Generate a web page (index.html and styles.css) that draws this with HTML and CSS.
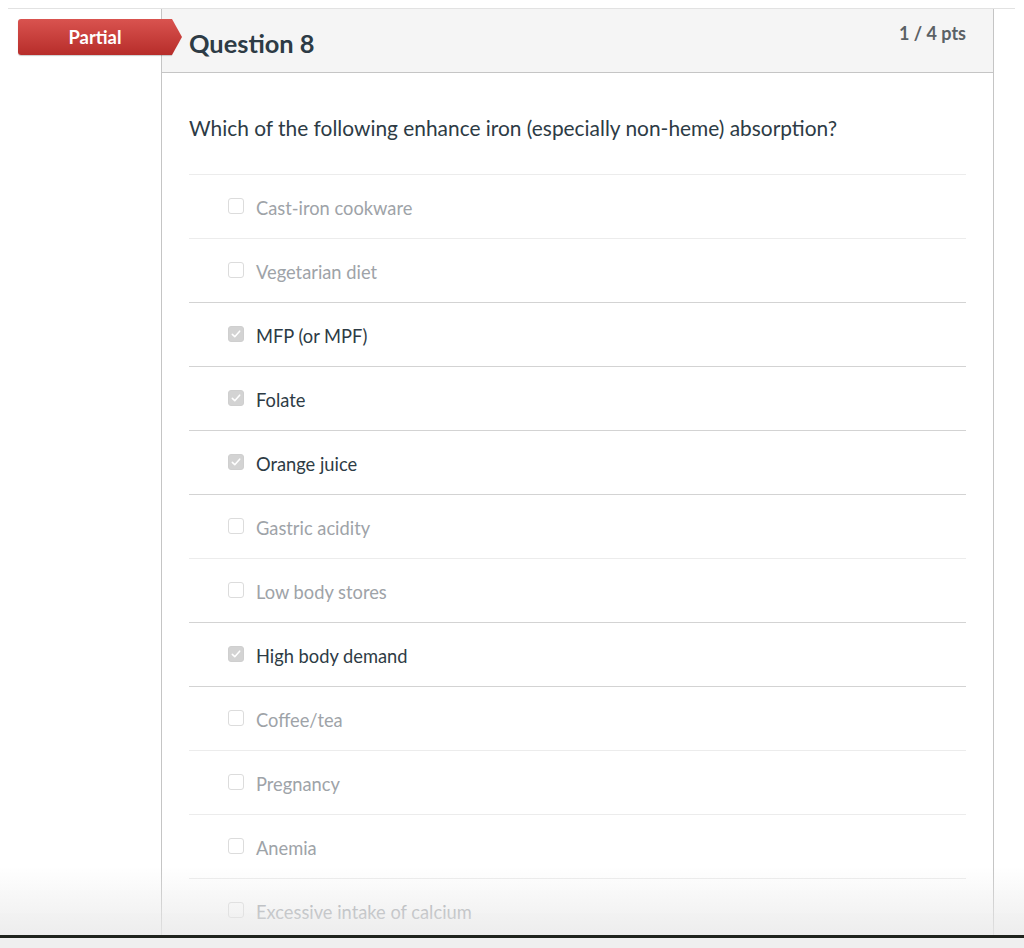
FILE: index.html
```html
<!DOCTYPE html>
<html>
<head>
<meta charset="utf-8">
<link rel="stylesheet" href="styles.css">
</head>
<body>
<div class="page">
  <div class="topline"></div>
  <div class="card">
    <div class="badge">Partial</div>
    <div class="header">
      <h2 class="title">Question 8</h2>
      <div class="pts">1 / 4 pts</div>
    </div>
    <div class="body">
      <p class="question">Which of the following enhance iron (especially non-heme) absorption?</p>
      <ul class="answers">
        <li class="answer"><span class="box"></span><span class="label">Cast-iron cookware</span></li>
        <li class="answer"><span class="box"></span><span class="label">Vegetarian diet</span></li>
        <li class="answer checked"><span class="box"><svg viewBox="0 0 16 16" width="16" height="16"><path d="M3.8 8.4 L6.6 11.1 L12.2 4.8" fill="none" stroke="#fff" stroke-width="1.8" stroke-linecap="round" stroke-linejoin="round"/></svg></span><span class="label">MFP (or MPF)</span></li>
        <li class="answer checked"><span class="box"><svg viewBox="0 0 16 16" width="16" height="16"><path d="M3.8 8.4 L6.6 11.1 L12.2 4.8" fill="none" stroke="#fff" stroke-width="1.8" stroke-linecap="round" stroke-linejoin="round"/></svg></span><span class="label">Folate</span></li>
        <li class="answer checked"><span class="box"><svg viewBox="0 0 16 16" width="16" height="16"><path d="M3.8 8.4 L6.6 11.1 L12.2 4.8" fill="none" stroke="#fff" stroke-width="1.8" stroke-linecap="round" stroke-linejoin="round"/></svg></span><span class="label">Orange juice</span></li>
        <li class="answer after-checked"><span class="box"></span><span class="label">Gastric acidity</span></li>
        <li class="answer"><span class="box"></span><span class="label">Low body stores</span></li>
        <li class="answer checked"><span class="box"><svg viewBox="0 0 16 16" width="16" height="16"><path d="M3.8 8.4 L6.6 11.1 L12.2 4.8" fill="none" stroke="#fff" stroke-width="1.8" stroke-linecap="round" stroke-linejoin="round"/></svg></span><span class="label">High body demand</span></li>
        <li class="answer after-checked"><span class="box"></span><span class="label">Coffee/tea</span></li>
        <li class="answer"><span class="box"></span><span class="label">Pregnancy</span></li>
        <li class="answer"><span class="box"></span><span class="label">Anemia</span></li>
        <li class="answer"><span class="box"></span><span class="label">Excessive intake of calcium</span></li>
      </ul>
    </div>
  </div>
</div>
<div class="bottom-fade"></div>
<div class="bottom-bar"></div>
</body>
</html>
```

FILE: styles.css
```css
html, body {
  margin: 0;
  padding: 0;
  background: #ffffff;
  font-family: Lato, "Open Sans", sans-serif;
  overflow: hidden;
  height: 948px;
}

.page {
  padding-top: 8px;
}

.topline {
  height: 1px;
  margin: 0 9px 0 8px;
  background: #e2e2e2;
}

.card {
  position: relative;
  margin-left: 161px;
  width: 831px;
  border-left: 1px solid #c5c5c5;
  border-right: 1px solid #c5c5c5;
}

.badge {
  position: absolute;
  left: -144px;
  top: 10px;
  width: 154px;
  height: 36px;
  line-height: 36px;
  text-align: center;
  color: #fff;
  font-size: 18.4px;
  font-weight: 700;
  background: linear-gradient(#d9534f, #b72d2a);
  border-radius: 3px 0 0 3px;
  box-shadow: 0 1px 1px rgba(0,0,0,0.2);
}

.badge::after {
  content: "";
  position: absolute;
  right: -10px;
  top: 0;
  width: 10px;
  height: 36px;
  background: linear-gradient(#d9534f, #b72d2a);
  clip-path: polygon(0 0, 100% 50%, 0 100%);
}

.header {
  display: flex;
  justify-content: space-between;
  align-items: flex-start;
  height: 63px;
  background: #f5f5f5;
  border-bottom: 1px solid #c5c5c5;
  padding: 0 27px 0 27px;
}

.title {
  margin: 0;
  padding-top: 19px;
  font-size: 25.4px;
  line-height: 30px;
  font-weight: 700;
  color: #2d3b45;
}

.pts {
  padding-top: 13px;
  font-size: 18px;
  line-height: 22px;
  font-weight: 700;
  color: #5b6165;
}

.body {
  padding: 0 27px;
}

.question {
  margin: 0;
  padding: 43px 0 34px;
  font-size: 20.9px;
  line-height: 24px;
  color: #2d3b45;
}

.answers {
  list-style: none;
  margin: 0;
  padding: 0;
}

.answer {
  display: flex;
  align-items: center;
  height: 63px;
  border-top: 1px solid #ececec;
  padding-left: 39px;
  gap: 12px;
}

.answer.checked,
.answer.after-checked {
  border-top-color: #d3d3d3;
}

.box {
  width: 14px;
  height: 14px;
  border: 1px solid #dcdcdc;
  border-radius: 3px;
  background: #fff;
  margin-top: -2px;
  display: flex;
  align-items: center;
  justify-content: center;
}

.box svg {
  width: 14px;
  height: 14px;
}

.checked .box {
  background: #d3d3d3;
  border-color: #cfcfcf;
}

.label {
  font-size: 18.3px;
  color: #9ea3a8;
  margin-top: 2px;
}

.checked .label {
  color: #2d3b45;
}

.bottom-fade {
  position: fixed;
  left: 0;
  right: 0;
  top: 868px;
  height: 67px;
  background: linear-gradient(rgba(235,235,235,0), rgba(232,232,232,0.8));
  pointer-events: none;
}

.bottom-bar {
  position: fixed;
  left: 0;
  right: 0;
  top: 935px;
  height: 13px;
  background: #efefef;
  border-top: 3px solid #1f231d;
  box-sizing: border-box;
}
```
